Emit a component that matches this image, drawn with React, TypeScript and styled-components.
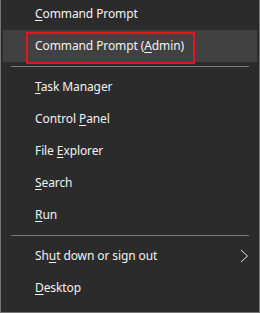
import React from 'react';
import styled, { createGlobalStyle } from 'styled-components';

type Item =
  | { kind: 'item'; label: string; key: number; active?: boolean; submenu?: boolean }
  | { kind: 'sep' };

const items: Item[] = [
  { kind: 'item', label: 'Command Prompt', key: 0 },
  { kind: 'item', label: 'Command Prompt (Admin)', key: 16, active: true },
  { kind: 'sep' },
  { kind: 'item', label: 'Task Manager', key: 0 },
  { kind: 'item', label: 'Control Panel', key: 8 },
  { kind: 'item', label: 'File Explorer', key: 5 },
  { kind: 'item', label: 'Search', key: 0 },
  { kind: 'item', label: 'Run', key: 0 },
  { kind: 'sep' },
  { kind: 'item', label: 'Shut down or sign out', key: 2, submenu: true },
  { kind: 'item', label: 'Desktop', key: 0 },
];

const GlobalStyle = createGlobalStyle`
  html, body {
    margin: 0;
    padding: 0;
    background: #2b2b2b;
    overflow: hidden;
  }
`;

// the top of the menu is cut off in the shot, so it starts 2px above the page
const Menu = styled.div`
  box-sizing: border-box;
  width: 260px;
  height: 315px;
  margin-top: -2px;
  padding: 0 2px 8px 2px;
  background: #2b2b2b;
  border: 1px solid #767676;
  border-top: none;
  font-family: 'Noto Sans', 'Open Sans', sans-serif;
  font-size: 12px;
  letter-spacing: -0.1px;
  color: #f2f2f2;
  display: flex;
  flex-direction: column;
`;

const Row = styled.div<{ $active?: boolean }>`
  position: relative;
  height: 32px;
  display: flex;
  align-items: center;
  padding-left: 32px;
  background: ${({ $active }) => ($active ? '#414141' : 'transparent')};
`;

const Label = styled.span`
  line-height: 16px;
  white-space: nowrap;
`;

const Key = styled.span`
  text-decoration: underline;
  text-underline-offset: 2px;
  text-decoration-thickness: 1px;
`;

const Callout = styled.div`
  position: absolute;
  left: 23px;
  top: 2px;
  width: 169px;
  height: 32px;
  border: 2px solid #e8141b;
  box-sizing: border-box;
`;

const Separator = styled.div`
  height: 9px;
  display: flex;
  align-items: center;
  padding: 0 8px;

  &::after {
    content: '';
    flex: 1;
    height: 1px;
    background: #7b7b7b;
  }
`;

const Chevron = styled.svg`
  position: absolute;
  right: 8px;
  top: 9px;
`;

function renderLabel(label: string, key: number) {
  return (
    <Label>
      {label.slice(0, key)}
      <Key>{label[key]}</Key>
      {label.slice(key + 1)}
    </Label>
  );
}

export default function App() {
  return (
    <>
      <GlobalStyle />
      <Menu>
        {items.map((it, i) =>
          it.kind === 'sep' ? (
            <Separator key={i} />
          ) : (
            <Row key={i} $active={it.active}>
              {renderLabel(it.label, it.key)}
              {it.active && <Callout />}
              {it.submenu && (
                <Chevron width="9" height="14" viewBox="0 0 9 14">
                  <path d="M1 1 L7.5 7 L1 13" fill="none" stroke="#e6e6e6" strokeWidth="1" />
                </Chevron>
              )}
            </Row>
          )
        )}
      </Menu>
    </>
  );
}
